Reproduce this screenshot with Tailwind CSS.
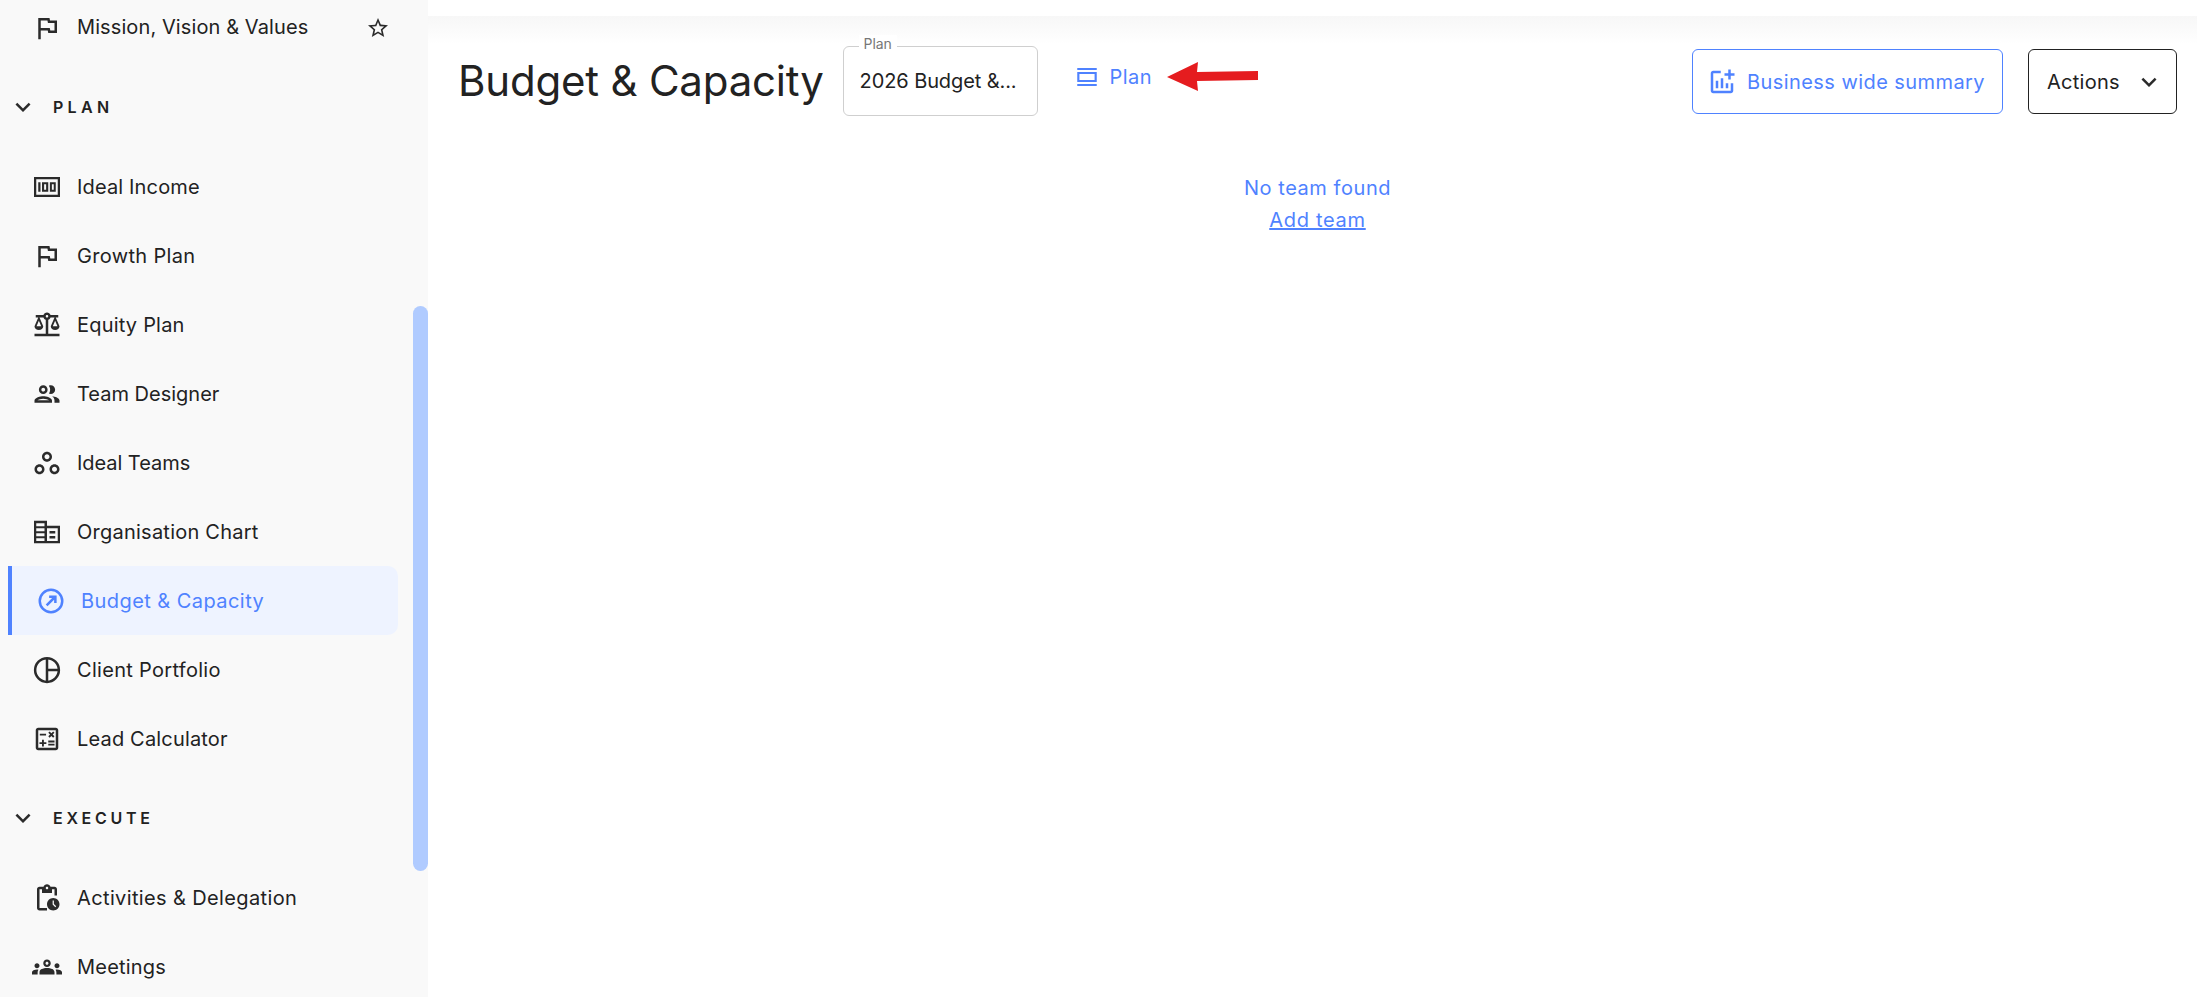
<!DOCTYPE html>
<html lang="en">

<head>
    <meta charset="UTF-8">
    <meta name="viewport" content="width=device-width, initial-scale=1.0">
    <title>Budget &amp; Capacity</title>
    <script src="https://cdn.jsdelivr.net/npm/@tailwindcss/browser@4"></script>
</head>

<body class="bg-white font-['Inter',sans-serif] text-[#222222] overflow-hidden">
    <div class="flex h-[997px] w-[2197px] overflow-hidden">
        <!-- sidebar -->
        <aside class="relative w-[428px] h-full shrink-0 bg-[#f9f9f9] overflow-hidden text-[20px]">
            <div class="flex flex-col -mt-[7px]">
                <a class="flex items-center h-[69px] pl-[32px]">
                    <svg class="w-[30px] h-[30px] shrink-0 fill-[#2b2b2b]" viewBox="0 0 24 24"><path d="M12.36 6l.4 2H18v6h-3.36l-.4-2H7V6h5.36M14 4H5v17h2v-7h5.6l.4 2h7V6h-5.6L14 4z"/></svg>
                    <span class="ml-[15px] w-[292px] tracking-[0.1px] -translate-y-[1px]">Mission, Vision &amp; Values</span>
                    <svg class="w-[24px] h-[24px] -ml-[3px] fill-[#2b2b2b]" viewBox="0 0 24 24"><path d="M22 9.24l-7.19-.62L12 2 9.19 8.63 2 9.24l5.46 4.73L5.82 21 12 17.27 18.18 21l-1.63-7.03L22 9.24zM12 15.4l-3.76 2.27 1-4.28-3.32-2.88 4.38-.38L12 6.1l1.71 4.04 4.38.38-3.32 2.88 1 4.28L12 15.4z"/></svg>
                </a>

                <div class="flex items-center h-[90px] pl-[8px]">
                    <svg class="w-[30px] h-[30px] fill-[#2b2b2b]" viewBox="0 0 24 24"><path d="M16.59 8.59L12 13.17 7.41 8.59 6 10l6 6 6-6z"/></svg>
                    <span class="ml-[15px] text-[16px] font-semibold tracking-[4.3px]">PLAN</span>
                </div>

                <a class="flex items-center h-[69px] pl-[32px]">
                    <svg class="w-[30px] h-[30px] shrink-0 fill-[#2b2b2b]" viewBox="0 0 24 24"><path fill-rule="evenodd" d="M1.600 4h20.800v16H1.600V4zm1.800 1.800v12.400h17.200V5.800H3.400zM5 8.200h1.800v7.600H5V8.200zm3 0h5v7.600H8V8.200zm1.700 1.600v4.400h1.600V9.800H9.700zm4.600-1.600H19v7.600h-4.700V8.200zm1.600 1.600v4.400h1.500V9.800h-1.500z"/></svg>
                    <span class="ml-[15px] tracking-[0.15px]">Ideal Income</span>
                </a>
                <a class="flex items-center h-[69px] pl-[32px]">
                    <svg class="w-[30px] h-[30px] shrink-0 fill-[#2b2b2b]" viewBox="0 0 24 24"><path d="M12.36 6l.4 2H18v6h-3.36l-.4-2H7V6h5.36M14 4H5v17h2v-7h5.6l.4 2h7V6h-5.6L14 4z"/></svg>
                    <span class="ml-[15px] tracking-[0.34px]">Growth Plan</span>
                </a>
                <a class="flex items-center h-[69px] pl-[32px]">
                    <svg class="w-[30px] h-[30px] shrink-0 fill-[#2b2b2b]" viewBox="0 0 24 24"><path d="M13 7.83c.85-.3 1.53-.98 1.83-1.83H18l-3 7c0 1.66 1.57 3 3.5 3s3.5-1.34 3.5-3l-3-7h2V4h-6.170c-.41-1.170-1.520-2-2.830-2s-2.420.83-2.830 2H3v2h2l-3 7c0 1.660 1.570 3 3.500 3S9 14.660 9 13L6 6h3.170c.3.850.980 1.530 1.830 1.830V19H2v2h20v-2h-9V7.830zM20.370 13h-3.740l1.870-4.360L20.370 13zm-13 0H3.630L5.500 8.640 7.370 13zM12 6c-.550 0-1-.450-1-1 0-.550.450-1 1-1s1 .450 1 1c0 .550-.450 1-1 1z"/></svg>
                    <span class="ml-[15px] tracking-[0.2px]">Equity Plan</span>
                </a>
                <a class="flex items-center h-[69px] pl-[32px]">
                    <svg class="w-[30px] h-[30px] shrink-0 fill-[#2b2b2b]" viewBox="0 0 24 24"><path d="M9 13.750c-2.340 0-7 1.170-7 3.500V19h14v-1.750c0-2.330-4.660-3.500-7-3.500zM4.340 17c.840-.580 2.870-1.250 4.660-1.250s3.820.670 4.660 1.250H4.340zM9 12c1.930 0 3.500-1.570 3.500-3.500S10.930 5 9 5 5.500 6.570 5.500 8.500 7.070 12 9 12zm0-5c.830 0 1.500.670 1.500 1.500S9.830 10 9 10s-1.500-.670-1.500-1.500S8.170 7 9 7zm7.040 6.810c1.160.840 1.960 1.960 1.960 3.440V19h4v-1.750c0-2.020-3.500-3.170-5.960-3.440zM15 12c1.930 0 3.500-1.570 3.500-3.500S16.930 5 15 5c-.540 0-1.040.130-1.500.350.630.890 1 1.980 1 3.150s-.370 2.260-1 3.150c.460.220.960.350 1.500.350z"/></svg>
                    <span class="ml-[15px] tracking-[0px]">Team Designer</span>
                </a>
                <a class="flex items-center h-[69px] pl-[32px]">
                    <svg class="w-[30px] h-[30px] shrink-0 fill-[#2b2b2b]" viewBox="0 0 24 24"><path d="M6 13c-2.200 0-4 1.800-4 4s1.800 4 4 4 4-1.800 4-4-1.800-4-4-4zm0 6c-1.100 0-2-.900-2-2s.900-2 2-2 2 .900 2 2-.900 2-2 2zm6-16C9.800 3 8 4.800 8 7s1.800 4 4 4 4-1.800 4-4-1.800-4-4-4zm0 6c-1.100 0-2-.900-2-2s.900-2 2-2 2 .900 2 2-.900 2-2 2zm6 4c-2.200 0-4 1.800-4 4s1.800 4 4 4 4-1.800 4-4-1.800-4-4-4zm0 6c-1.100 0-2-.900-2-2s.900-2 2-2 2 .900 2 2-.900 2-2 2z"/></svg>
                    <span class="ml-[15px] tracking-[-0.05px]">Ideal Teams</span>
                </a>
                <a class="flex items-center h-[69px] pl-[32px]">
                    <svg class="w-[30px] h-[30px] shrink-0 fill-[#2b2b2b]" viewBox="0 0 24 24"><path fill-rule="evenodd" d="M1.600 3h10.400v4h10.400v14H1.600V3zm1.800 2v2.400H10V5H3.400zm0 4v2.400H10V9H3.400zm0 4v2.400H10V13H3.400zm0 4v2.200H10V17H3.400zM12 9v10.200h8.600V9H12zm2 2.200h4.600v2H14v-2zm0 4h4.600v2H14v-2z"/></svg>
                    <span class="ml-[15px] tracking-[0.24px]">Organisation Chart</span>
                </a>
                <a class="flex items-center h-[69px] ml-[8px] w-[390px] pl-[24px] border-l-4 border-[#4f82ff] bg-[#eef3ff] rounded-r-[10px] text-[#4f82ff]">
                    <svg class="w-[30px] h-[30px] shrink-0" viewBox="0 0 24 24" fill="none" stroke="#4f82ff" stroke-width="2"><circle cx="12" cy="12" r="9"/><path d="M8.500 15.500L15 9M10.500 8.500H15.500V13.500"/></svg>
                    <span class="ml-[15px] tracking-[0.44px]">Budget &amp; Capacity</span>
                </a>
                <a class="flex items-center h-[69px] pl-[32px]">
                    <svg class="w-[30px] h-[30px] shrink-0" viewBox="0 0 24 24" fill="none" stroke="#2b2b2b" stroke-width="2"><circle cx="12" cy="12" r="9.500"/><path d="M12 2.500V21.500M12 12H21.500"/></svg>
                    <span class="ml-[15px] tracking-[0.3px]">Client Portfolio</span>
                </a>
                <a class="flex items-center h-[69px] pl-[32px]">
                    <svg class="w-[30px] h-[30px] shrink-0 fill-[#2b2b2b]" viewBox="0 0 24 24"><path d="M19 3H5c-1.100 0-2 .900-2 2v14c0 1.100.900 2 2 2h14c1.100 0 2-.900 2-2V5c0-1.100-.900-2-2-2zm0 16H5V5h14v14zM6.250 7.720h5v1.500h-5zM13 15.750h5v1.500h-5zm0-2.500h5v1.500h-5zM8 18h1.500v-2h2v-1.500h-2v-2H8v2H6V16h2zm6.090-7.050l1.410-1.410 1.410 1.410 1.060-1.060-1.410-1.420 1.410-1.410L16.910 6 15.500 7.410 14.090 6l-1.060 1.060 1.410 1.410-1.410 1.420z"/></svg>
                    <span class="ml-[15px] tracking-[0.17px]">Lead Calculator</span>
                </a>

                <div class="flex items-center h-[90px] pl-[8px]">
                    <svg class="w-[30px] h-[30px] fill-[#2b2b2b]" viewBox="0 0 24 24"><path d="M16.59 8.59L12 13.17 7.41 8.59 6 10l6 6 6-6z"/></svg>
                    <span class="ml-[15px] text-[16px] font-semibold tracking-[3.7px]">EXECUTE</span>
                </div>

                <a class="flex items-center h-[69px] pl-[32px]">
                    <svg class="w-[30px] h-[30px] shrink-0 fill-[#2b2b2b]" viewBox="0 0 24 24"><path d="M17 12c-2.760 0-5 2.240-5 5s2.240 5 5 5 5-2.240 5-5-2.240-5-5-5zm1.650 7.350L16.500 17.200V14h1v2.790l1.850 1.850-.700.710zM18 3h-3.180C14.400 1.840 13.300 1 12 1s-2.400.840-2.820 2H6c-1.100 0-2 .900-2 2v15c0 1.100.900 2 2 2h6v-2H6V5h2v3h8V5h2v5h2V5c0-1.100-.900-2-2-2zm-6 2c-.550 0-1-.450-1-1s.450-1 1-1 1 .450 1 1-.450 1-1 1z"/></svg>
                    <span class="ml-[15px] tracking-[0.37px]">Activities &amp; Delegation</span>
                </a>
                <a class="flex items-center h-[69px] pl-[32px]">
                    <svg class="w-[30px] h-[30px] shrink-0 fill-[#2b2b2b]" viewBox="0 0 24 24"><path fill-rule="evenodd" d="M12 12.750c1.630 0 3.070.390 4.240.900 1.080.480 1.760 1.560 1.760 2.730V18H6v-1.610c0-1.180.680-2.260 1.760-2.730 1.170-.520 2.610-.910 4.240-.910zM4 13c1.100 0 2-.900 2-2s-.900-2-2-2-2 .900-2 2 .900 2 2 2zm1.130 1.100c-.370-.060-.740-.100-1.130-.100-.990 0-1.930.210-2.780.580C.480 14.900 0 15.620 0 16.430V18h4.500v-1.610c0-.830.230-1.610.630-2.290zM20 13c1.100 0 2-.900 2-2s-.900-2-2-2-2 .900-2 2 .900 2 2 2zm4 3.430c0-.810-.480-1.530-1.220-1.850-.850-.370-1.790-.580-2.780-.580-.390 0-.760.040-1.130.100.400.680.630 1.460.630 2.290V18H24v-1.570zM12 6c1.660 0 3 1.340 3 3s-1.340 3-3 3-3-1.340-3-3 1.340-3 3-3zm0 1.800c-.660 0-1.200.540-1.200 1.200s.540 1.200 1.200 1.200 1.200-.540 1.200-1.200-.540-1.200-1.200-1.200z"/></svg>
                    <span class="ml-[15px] tracking-[0.2px]">Meetings</span>
                </a>
            </div>
            <!-- scrollbar thumb -->
            <div class="absolute left-[413px] top-[306px] w-[15px] h-[565px] rounded-[8px] bg-[#b0cbff]"></div>
        </aside>

        <!-- main -->
        <main class="flex-1 flex flex-col min-w-0">
            <div class="h-[16px] bg-white"></div>
            <div class="h-[28px] bg-linear-to-b from-[#f7f7f7] to-white"></div>

            <div class="flex items-start h-[70px] mt-[2px] pl-[30px] pr-[20px]">
                <h1 class="text-[42px] leading-[70px] tracking-[-0.2px] font-normal">Budget &amp; Capacity</h1>
                <div class="relative ml-[19px] flex items-center w-[195px] h-[70px] px-[16px] border border-[#cfcfcf] rounded-[6px] text-[20px] tracking-[-0.1px]">
                    <span class="absolute left-[15px] -top-[12px] px-[5px] bg-white text-[14px] leading-[18px] text-[#777777]">Plan</span>
                    <span class="whitespace-nowrap">2026 Budget &amp;...</span>
                </div>
                <a class="flex items-center h-[62px] ml-[36px] text-[20px] tracking-[0.4px] text-[#4f82ff]">
                    <svg class="w-[26px] h-[24px]" viewBox="0 0 24 24" fill="#4f82ff" preserveAspectRatio="none"><path fill-rule="evenodd" d="M3 3h18v2H3zM3 19h18v2H3zM3 7h18v10H3V7zm2 2v6h14V9H5z"/></svg>
                    <span class="ml-[10px]">Plan</span>
                    <svg class="ml-[15px] w-[92px] h-[30px]" viewBox="0 0 92 30"><polygon fill="#e51c1f" points="0,15 31,0 30,10 91,9 91,18 30,19 31,29"/></svg>
                </a>
                <div class="ml-auto flex gap-[25px]">
                    <button class="flex items-center w-[311px] h-[65px] mt-[3px] pl-[14px] border border-[#4f82ff] rounded-[6px] text-[20px] tracking-[0.43px] text-[#4f82ff]">
                        <svg class="w-[30px] h-[30px]" viewBox="0 0 24 24" fill="#4f82ff"><path d="M22 5v2h-3v3h-2V7h-3V5h3V2h2v3h3zm-3 14H5V5h6V3H5c-1.100 0-2 .900-2 2v14c0 1.100.900 2 2 2h14c1.100 0 2-.900 2-2v-6h-2v6zm-4-6v4h2v-4h-2zm-4 4h2V9h-2v8zm-2 0v-6H7v6h2z"/></svg>
                        <span class="ml-[10px]">Business wide summary</span>
                    </button>
                    <button class="flex items-center w-[149px] h-[65px] mt-[3px] pl-[18px] border border-[#222222] rounded-[6px] text-[20px] tracking-[0.27px]">
                        <span>Actions</span>
                        <svg class="ml-[14px] w-[30px] h-[30px] fill-[#2b2b2b]" viewBox="0 0 24 24"><path d="M16.59 8.59L12 13.17 7.41 8.59 6 10l6 6 6-6z"/></svg>
                    </button>
                </div>
            </div>

            <div class="flex flex-col items-center mt-[56px] pl-[10px] text-[20px] text-[#4f82ff] leading-[32px]">
                <p class="tracking-[0.55px]">No team found</p>
                <a class="underline tracking-[0.7px]">Add team</a>
            </div>
        </main>
    </div>
</body>

</html>
